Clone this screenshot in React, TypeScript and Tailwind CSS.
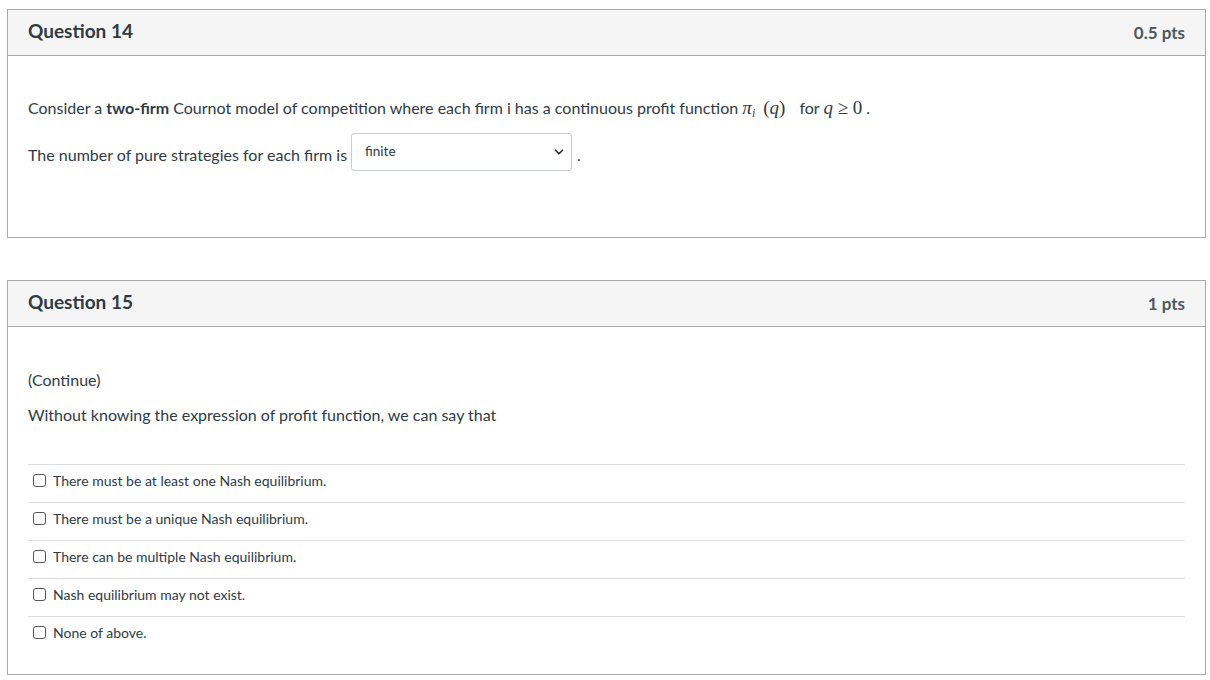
import { ChevronDown } from 'lucide-react'

const answers = [
	'There must be at least one Nash equilibrium.',
	'There must be a unique Nash equilibrium.',
	'There can be multiple Nash equilibrium.',
	'Nash equilibrium may not exist.',
	'None of above.',
]

function Header({ title, pts }: { title: string; pts: string }) {
	return (
		<div className="flex h-[46px] items-center justify-between border-b border-[#a9a9a9] bg-[#f5f5f5] px-[20px]">
			<h2 className="-mt-[2px] text-[19px] font-bold text-[#2d3b45]">{title}</h2>
			<span className="text-[17px] font-bold text-[#4b5963]">{pts}</span>
		</div>
	)
}

export default function App() {
	return (
		<div className="min-h-screen bg-white pl-[7px] pr-[4px] pt-[9px] font-['Lato','Open_Sans',sans-serif] text-[16px] text-[#2d3b45]">
			{/* question 14 */}
			<div className="w-[1199px] border border-[#a9a9a9]">
				<Header title="Question 14" pts="0.5 pts" />
				<div className="px-[20px] pb-[66px] pt-[41px]">
					<p className="leading-[22px]">
						Consider a <strong>two-firm</strong> Cournot model of competition where each firm i has a continuous profit function{' '}
						<span className="font-['Liberation_Serif',serif] text-[19px]">
							<i>π</i>
							<sub className="text-[12px] italic">i</sub>
							<span className="ml-[8px]">(</span>
							<i>q</i>)
						</span>
						<span className="ml-[14px]">for </span>
						<span className="font-['Liberation_Serif',serif] text-[19px]">
							<i>q</i> ≥ 0
						</span>
						<span className="ml-[4px]">.</span>
					</p>
					<div className="mt-[14px] flex items-center">
						<span className="pt-[6px]">The number of pure strategies for each firm is</span>
						<div className="ml-[4px] flex h-[38px] w-[221px] items-center justify-between rounded-[3px] border border-[#c7cdd1] pl-[13px] pr-[5px]">
							<span className="-mt-[2px] text-[13.5px] text-[#2d3b45]">finite</span>
							<ChevronDown size={14} strokeWidth={3} className="text-[#333]" />
						</div>
						<span className="ml-[5px] pt-[6px]">.</span>
					</div>
				</div>
			</div>

			{/* question 15 */}
			<div className="mt-[42px] w-[1199px] border border-[#a9a9a9]">
				<Header title="Question 15" pts="1 pts" />
				<div className="px-[20px] pb-[20px] pt-[42px]">
					<p className="leading-[22px]">(Continue)</p>
					<p className="mt-[13px] leading-[22px]">Without knowing the expression of profit function, we can say that</p>
					<div className="mt-[38px]">
						{answers.map((a) => (
							<label key={a} className="flex h-[38px] items-center border-t border-[#dcdcdc] pb-[6px] pl-[5px] text-[14px] text-[#2d3b45]">
								<span className="h-[13px] w-[13px] shrink-0 rounded-[3px] border border-[#555]" />
								<span className="ml-[7px]">{a}</span>
							</label>
						))}
					</div>
				</div>
			</div>
		</div>
	)
}
